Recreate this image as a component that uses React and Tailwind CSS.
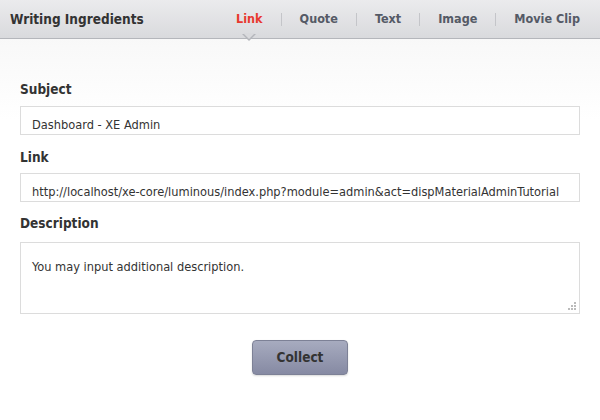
import React from "react";

const tabs = ["Link", "Quote", "Text", "Image", "Movie Clip"];

export default function App() {
  return (
    <div
      className="w-[600px] h-[420px] bg-gradient-to-b from-[#f5f5f5] to-white to-[120px] text-[#333]"
      style={{ fontFamily: '"DejaVu Sans Condensed", "DejaVu Sans", Tahoma, sans-serif' }}
    >
      {/* Header */}
      <div className="relative h-[39px] bg-gradient-to-b from-[#ebebed] to-[#d9dadd] border-b border-[#b4b6bb] flex items-center justify-between pl-[10px] pr-[2px]">
        <h1 className="text-[13.5px] font-bold text-[#333] pt-px">Writing Ingredients</h1>
        <ul className="flex items-center h-full">
          {tabs.map((t, i) => (
            <li key={t} className="flex items-center">
              {i > 0 && <span className="w-px h-[13px] bg-[#c4c5c9]" />}
              <a
                className={`relative block px-[18px] text-[12.5px] font-bold ${
                  i === 0 ? "text-[#e8392f]" : "text-[#555a66]"
                }`}
              >
                {t}
                {i === 0 && (
                  <span className="absolute left-1/2 -translate-x-1/2 top-[24px] w-0 h-0 border-x-[7px] border-x-transparent border-t-[7px] border-t-[#b4b6bb]">
                    <span className="absolute left-[-6px] top-[-8px] w-0 h-0 border-x-[6px] border-x-transparent border-t-[6px] border-t-[#d9dadd]" />
                  </span>
                )}
              </a>
            </li>
          ))}
        </ul>
      </div>

      {/* Form */}
      <div className="px-[20px] pt-[42px] flex flex-col">
        <label className="text-[13.5px] font-bold text-[#333] leading-[16px]">Subject</label>
        <input
          className="mt-[9px] h-[29px] border border-[#dcdcdc] bg-white px-[11px] pt-[7px] text-[12.7px] text-[#333] outline-none"
          defaultValue="Dashboard - XE Admin"
        />
        <label className="mt-[14px] text-[13.5px] font-bold text-[#333] leading-[16px]">Link</label>
        <input
          className="mt-[8px] h-[29px] border border-[#dcdcdc] bg-white px-[11px] pt-[7px] text-[12.7px] text-[#333] outline-none"
          defaultValue="http://localhost/xe-core/luminous/index.php?module=admin&act=dispMaterialAdminTutorial"
        />
        <label className="mt-[13px] text-[13.5px] font-bold text-[#333] leading-[16px]">Description</label>
        <div className="relative mt-[11px]">
          <textarea
            className="block w-full h-[72px] border border-[#dcdcdc] bg-white px-[11px] pt-[14px] text-[12.7px] text-[#333] outline-none resize-none"
            defaultValue="You may input additional description."
          />
          {/* resize grip dots */}
          <svg className="absolute right-[3px] bottom-[3px]" width="10" height="10" viewBox="0 0 10 10">
            <rect x="7" y="1" width="2" height="2" fill="#bbb" />
            <rect x="4" y="4" width="2" height="2" fill="#bbb" />
            <rect x="7" y="4" width="2" height="2" fill="#bbb" />
            <rect x="1" y="7" width="2" height="2" fill="#bbb" />
            <rect x="4" y="7" width="2" height="2" fill="#bbb" />
            <rect x="7" y="7" width="2" height="2" fill="#bbb" />
          </svg>
        </div>
        <div className="flex justify-center mt-[26px]">
          <button className="w-[96px] h-[35px] rounded-[4px] border border-[#7d8196] bg-gradient-to-b from-[#a7abbf] to-[#868aa3] text-[13.5px] font-bold text-[#333] shadow-[0_1px_2px_rgba(0,0,0,0.15)]">
            Collect
          </button>
        </div>
      </div>
    </div>
  );
}
